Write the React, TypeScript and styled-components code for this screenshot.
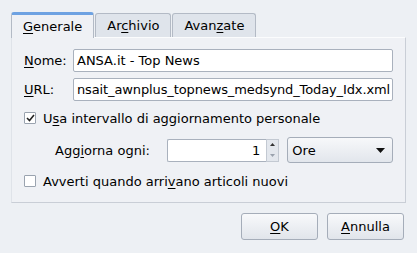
import React from 'react'
import styled, { createGlobalStyle } from 'styled-components'

const GlobalStyle = createGlobalStyle`
  html, body {
    margin: 0;
    padding: 0;
    background: #edf0f4;
  }
  body {
    font-family: 'DejaVu Sans', sans-serif;
    font-size: 13px;
    color: #000;
  }
`

const Dialog = styled.div`
  width: 417px;
  height: 253px;
  box-sizing: border-box;
  padding: 12px 12px 0 11px;
  display: flex;
  flex-direction: column;
`

const TabBar = styled.div`
  display: flex;
  align-items: flex-end;
  height: 25px;
`

const Tab = styled.div<{ $active?: boolean }>`
  box-sizing: border-box;
  height: ${(p) => (p.$active ? '26px' : '24px')};
  margin-bottom: ${(p) => (p.$active ? '-1px' : '0')};
  padding: 0 11px;
  display: flex;
  align-items: center;
  margin-right: 1px;
  border: 1px solid #b3bac5;
  border-bottom: none;
  border-radius: 3px 3px 0 0;
  background: ${(p) => (p.$active ? '#eff1f5' : '#dfe4eb')};
  border-top: ${(p) => (p.$active ? '3px solid #6ea2e2' : '1px solid #b3bac5')};
  position: relative;
  z-index: ${(p) => (p.$active ? 1 : 0)};
`

const Panel = styled.div`
  box-sizing: border-box;
  width: 395px;
  height: 166px;
  border-top: 1px solid #fbfcfd;
  border-left: 1px solid #dfe3e9;
  border-right: 1px solid #c9ced6;
  border-bottom: 1px solid #c9ced6;
  background: #eff1f5;
  padding: 11px 12px 0 12px;
  display: flex;
  flex-direction: column;
`

const FieldRow = styled.div`
  display: flex;
  align-items: center;
  height: 23px;
  margin-bottom: 6px;
`

const Label = styled.span`
  width: 49px;
`

const TextBox = styled.div<{ $tight?: boolean }>`
  box-sizing: border-box;
  width: 320px;
  height: 23px;
  background: #fff;
  border: 1px solid #a9b1bd;
  border-radius: 2px;
  padding: 0 2px 0 3px;
  display: flex;
  align-items: center;
  white-space: nowrap;
  overflow: hidden;
  letter-spacing: ${(p) => (p.$tight ? '-0.12px' : 'normal')};
`

const CheckRow = styled.div<{ $top?: number }>`
  display: flex;
  align-items: center;
  height: 18px;
  margin-top: ${(p) => p.$top ?? 0}px;
`

const Box = styled.span`
  box-sizing: border-box;
  width: 12px;
  height: 12px;
  border: 1px solid #9aa3af;
  background: #fff;
  border-radius: 1px;
  margin-right: 7px;
  display: flex;
  align-items: center;
  justify-content: center;
`

const IntervalRow = styled.div`
  display: flex;
  align-items: center;
  margin-top: 10px;
  padding-left: 31px;
  height: 26px;
`

const IntervalLabel = styled.span`
  width: 114px;
`

const Spin = styled.div`
  display: flex;
  align-items: stretch;
  height: 23px;
`

const SpinInput = styled.div`
  box-sizing: border-box;
  width: 99px;
  background: #fff;
  border: 1px solid #a9b1bd;
  border-right: none;
  border-radius: 2px 0 0 2px;
  display: flex;
  align-items: center;
  justify-content: flex-end;
  padding-right: 6px;
`

const SpinButtons = styled.div`
  width: 11px;
  display: flex;
  flex-direction: column;
  background: #e3e7ed;
  border: 1px solid #c3c9d2;
`

const SpinHalf = styled.div`
  flex: 1;
  display: flex;
  align-items: center;
  justify-content: center;
`

const Combo = styled.div`
  box-sizing: border-box;
  width: 107px;
  height: 26px;
  margin-left: 8px;
  border: 1px solid #a5adb9;
  border-radius: 3px;
  background: linear-gradient(#f7f8fa, #e2e6ec);
  display: flex;
  align-items: center;
  padding: 0 7px 0 4px;
  justify-content: space-between;
`

const Footer = styled.div`
  display: flex;
  justify-content: flex-end;
  gap: 9px;
  margin-top: 10px;
  padding-right: 1px;
`

const Button = styled.div`
  box-sizing: border-box;
  width: 77px;
  height: 27px;
  border: 1px solid #a5adb9;
  border-radius: 3px;
  background: linear-gradient(#f8f9fb, #e1e5eb);
  display: flex;
  align-items: center;
  justify-content: center;
`

const U = styled.span`
  text-decoration: underline;
  text-underline-offset: 2px;
`

const App: React.FC = () => {
  return (
    <>
      <GlobalStyle />
      <Dialog>
        <TabBar>
          <Tab $active>
            <span>
              <U>G</U>enerale
            </span>
          </Tab>
          <Tab>
            <span>
              Ar<U>c</U>hivio
            </span>
          </Tab>
          <Tab>
            <span>
              Avan<U>z</U>ate
            </span>
          </Tab>
        </TabBar>
        <Panel>
          <FieldRow>
            <Label>
              <U>N</U>ome:
            </Label>
            <TextBox>ANSA.it - Top News</TextBox>
          </FieldRow>
          <FieldRow>
            <Label>
              <U>U</U>RL:
            </Label>
            <TextBox $tight>nsait_awnplus_topnews_medsynd_Today_Idx.xml</TextBox>
          </FieldRow>
          <CheckRow $top={2}>
            <Box>
              <svg width='9' height='8' viewBox='0 0 9 8'>
                <path d='M1 4 L3.5 6.5 L8 1' fill='none' stroke='#222' strokeWidth='1.6' />
              </svg>
            </Box>
            <span>
              U<U>s</U>a intervallo di aggiornamento personale
            </span>
          </CheckRow>
          <IntervalRow>
            <IntervalLabel>
              Agg<U>i</U>orna ogni:
            </IntervalLabel>
            <Spin>
              <SpinInput>1</SpinInput>
              <SpinButtons>
                <SpinHalf>
                  <svg width='5' height='3' viewBox='0 0 5 3'>
                    <path d='M0 3 L2.5 0 L5 3 Z' fill='#333' />
                  </svg>
                </SpinHalf>
                <SpinHalf>
                  <svg width='5' height='3' viewBox='0 0 5 3'>
                    <path d='M0 0 L2.5 3 L5 0 Z' fill='#9aa2ad' />
                  </svg>
                </SpinHalf>
              </SpinButtons>
            </Spin>
            <Combo>
              <span>Ore</span>
              <svg width='9' height='5' viewBox='0 0 9 5'>
                <path d='M0 0 L4.5 5 L9 0 Z' fill='#111' />
              </svg>
            </Combo>
          </IntervalRow>
          <CheckRow $top={9}>
            <Box />
            <span>
              Avverti quando arri<U>v</U>ano articoli nuovi
            </span>
          </CheckRow>
        </Panel>
        <Footer>
          <Button>
            <span>
              <U>O</U>K
            </span>
          </Button>
          <Button>
            <span>
              <U>A</U>nnulla
            </span>
          </Button>
        </Footer>
      </Dialog>
    </>
  )
}

export default App
